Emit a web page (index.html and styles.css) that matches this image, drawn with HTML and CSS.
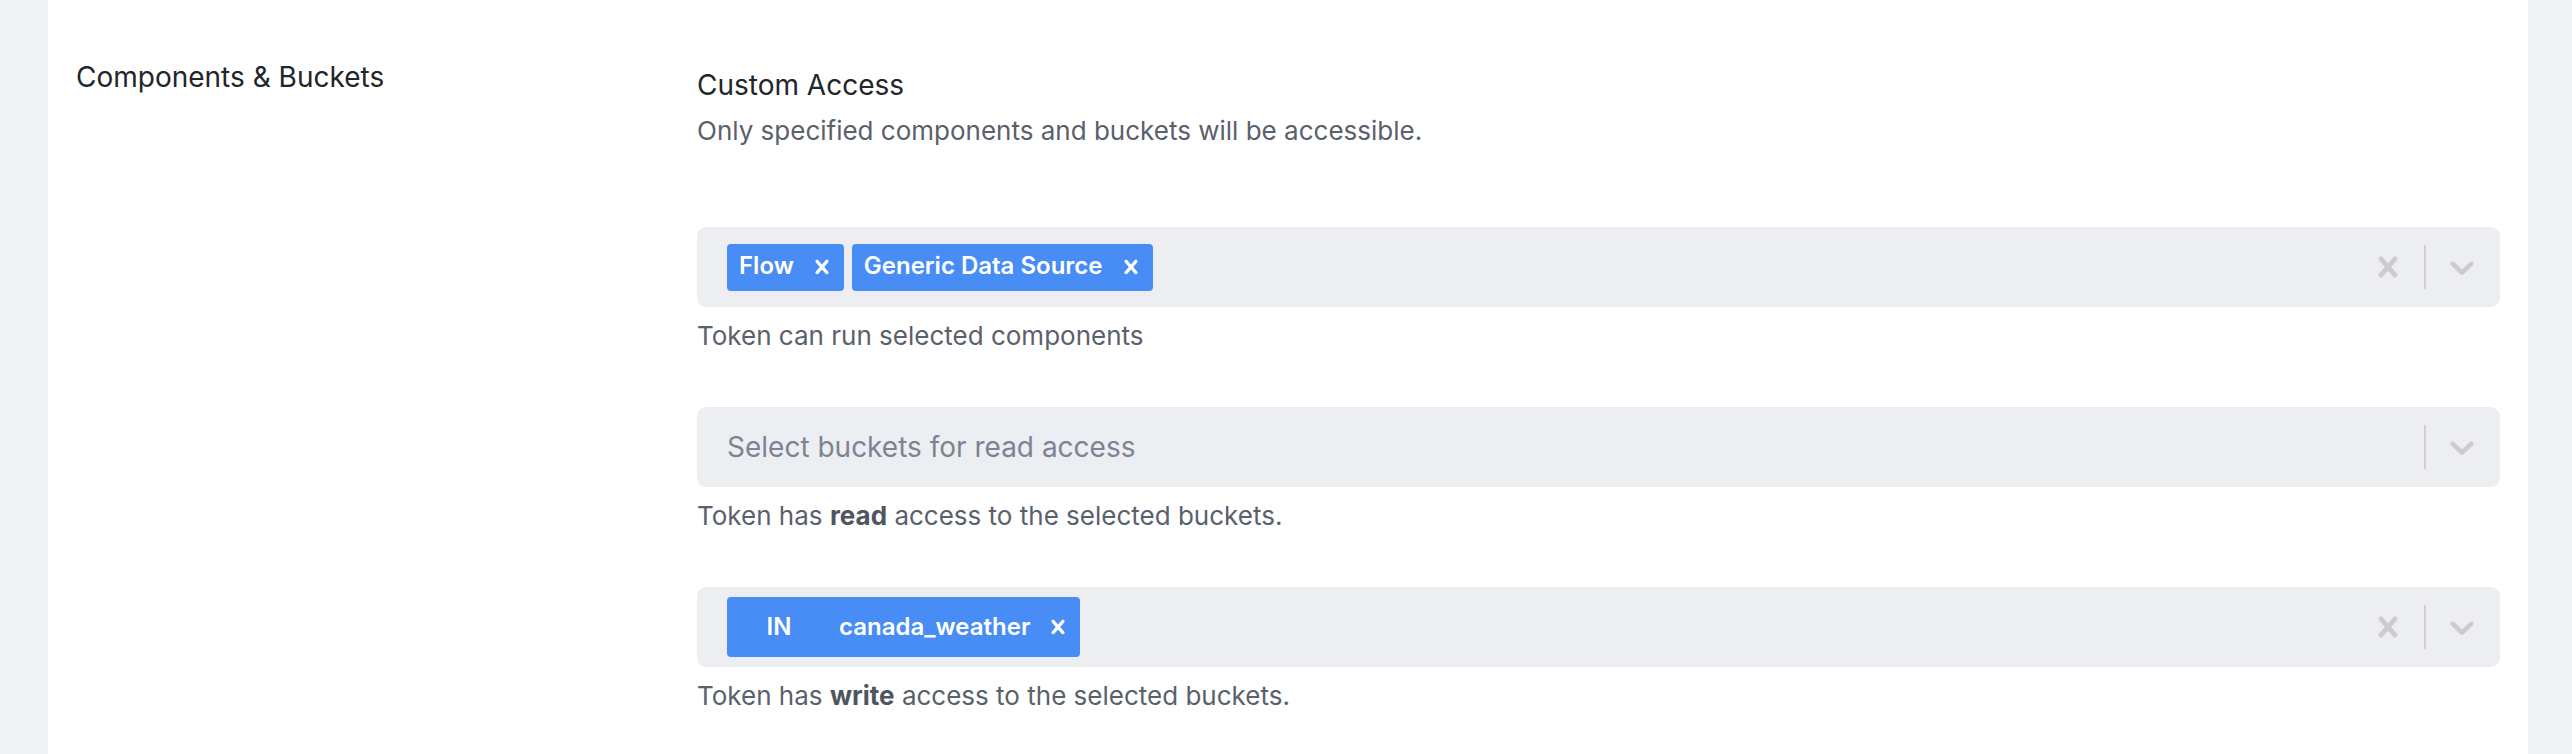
FILE: index.html
```html
<!DOCTYPE html>
<html lang="en">
<head>
<meta charset="utf-8">
<title>Components &amp; Buckets</title>
<link rel="stylesheet" href="styles.css">
</head>
<body>
<div class="page">
  <section class="card">
    <div class="row">
      <div class="label">Components &amp; Buckets</div>
      <div class="content">
        <div class="title">Custom Access</div>
        <p class="desc">Only specified components and buckets will be accessible.</p>

        <div class="field field-first">
          <div class="select">
            <div class="values">
              <span class="tag"><span class="tag-label">Flow</span><span class="tag-remove"><svg viewBox="0 0 20 20"><path d="M14.348 14.849c-0.469 0.469-1.229 0.469-1.697 0l-2.651-3.030-2.651 3.029c-0.469 0.469-1.229 0.469-1.697 0-0.469-0.469-0.469-1.229 0-1.697l2.758-3.15-2.759-3.152c-0.469-0.469-0.469-1.228 0-1.697s1.228-0.469 1.697 0l2.652 3.031 2.651-3.031c0.469-0.469 1.228-0.469 1.697 0s0.469 1.229 0 1.697l-2.758 3.152 2.758 3.15c0.469 0.469 0.469 1.229 0 1.698z"/></svg></span></span>
              <span class="tag"><span class="tag-label">Generic Data Source</span><span class="tag-remove"><svg viewBox="0 0 20 20"><path d="M14.348 14.849c-0.469 0.469-1.229 0.469-1.697 0l-2.651-3.030-2.651 3.029c-0.469 0.469-1.229 0.469-1.697 0-0.469-0.469-0.469-1.229 0-1.697l2.758-3.15-2.759-3.152c-0.469-0.469-0.469-1.228 0-1.697s1.228-0.469 1.697 0l2.652 3.031 2.651-3.031c0.469-0.469 1.228-0.469 1.697 0s0.469 1.229 0 1.697l-2.758 3.152 2.758 3.15c0.469 0.469 0.469 1.229 0 1.698z"/></svg></span></span>
            </div>
            <div class="indicators">
              <span class="ind"><svg viewBox="0 0 20 20"><path d="M14.348 14.849c-0.469 0.469-1.229 0.469-1.697 0l-2.651-3.030-2.651 3.029c-0.469 0.469-1.229 0.469-1.697 0-0.469-0.469-0.469-1.229 0-1.697l2.758-3.15-2.759-3.152c-0.469-0.469-0.469-1.228 0-1.697s1.228-0.469 1.697 0l2.652 3.031 2.651-3.031c0.469-0.469 1.228-0.469 1.697 0s0.469 1.229 0 1.697l-2.758 3.152 2.758 3.15c0.469 0.469 0.469 1.229 0 1.698z"/></svg></span>
              <span class="sep"></span>
              <span class="ind"><svg viewBox="0 0 20 20"><path d="M4.516 7.548c0.436-0.446 1.043-0.481 1.576 0l3.908 3.747 3.908-3.747c0.533-0.481 1.141-0.446 1.574 0 0.436 0.445 0.408 1.197 0 1.615-0.406 0.418-4.695 4.502-4.695 4.502-0.217 0.223-0.502 0.335-0.787 0.335s-0.57-0.112-0.789-0.335c0 0-4.287-4.084-4.695-4.502s-0.436-1.17 0-1.615z"/></svg></span>
            </div>
          </div>
          <p class="help">Token can run selected components</p>
        </div>

        <div class="field">
          <div class="select">
            <div class="values">
              <span class="placeholder">Select buckets for read access</span>
            </div>
            <div class="indicators">
              <span class="sep"></span>
              <span class="ind"><svg viewBox="0 0 20 20"><path d="M4.516 7.548c0.436-0.446 1.043-0.481 1.576 0l3.908 3.747 3.908-3.747c0.533-0.481 1.141-0.446 1.574 0 0.436 0.445 0.408 1.197 0 1.615-0.406 0.418-4.695 4.502-4.695 4.502-0.217 0.223-0.502 0.335-0.787 0.335s-0.57-0.112-0.789-0.335c0 0-4.287-4.084-4.695-4.502s-0.436-1.17 0-1.615z"/></svg></span>
            </div>
          </div>
          <p class="help">Token has <b>read</b> access to the selected buckets.</p>
        </div>

        <div class="field">
          <div class="select">
            <div class="values">
              <span class="tag tag-tall"><span class="tag-label"><span class="stage">IN</span><span class="bucket">canada_weather</span></span><span class="tag-remove"><svg viewBox="0 0 20 20"><path d="M14.348 14.849c-0.469 0.469-1.229 0.469-1.697 0l-2.651-3.030-2.651 3.029c-0.469 0.469-1.229 0.469-1.697 0-0.469-0.469-0.469-1.229 0-1.697l2.758-3.15-2.759-3.152c-0.469-0.469-0.469-1.228 0-1.697s1.228-0.469 1.697 0l2.652 3.031 2.651-3.031c0.469-0.469 1.228-0.469 1.697 0s0.469 1.229 0 1.697l-2.758 3.152 2.758 3.15c0.469 0.469 0.469 1.229 0 1.698z"/></svg></span></span>
            </div>
            <div class="indicators">
              <span class="ind"><svg viewBox="0 0 20 20"><path d="M14.348 14.849c-0.469 0.469-1.229 0.469-1.697 0l-2.651-3.030-2.651 3.029c-0.469 0.469-1.229 0.469-1.697 0-0.469-0.469-0.469-1.229 0-1.697l2.758-3.15-2.759-3.152c-0.469-0.469-0.469-1.228 0-1.697s1.228-0.469 1.697 0l2.652 3.031 2.651-3.031c0.469-0.469 1.228-0.469 1.697 0s0.469 1.229 0 1.697l-2.758 3.152 2.758 3.15c0.469 0.469 0.469 1.229 0 1.698z"/></svg></span>
              <span class="sep"></span>
              <span class="ind"><svg viewBox="0 0 20 20"><path d="M4.516 7.548c0.436-0.446 1.043-0.481 1.576 0l3.908 3.747 3.908-3.747c0.533-0.481 1.141-0.446 1.574 0 0.436 0.445 0.408 1.197 0 1.615-0.406 0.418-4.695 4.502-4.695 4.502-0.217 0.223-0.502 0.335-0.787 0.335s-0.57-0.112-0.789-0.335c0 0-4.287-4.084-4.695-4.502s-0.436-1.17 0-1.615z"/></svg></span>
            </div>
          </div>
          <p class="help">Token has <b>write</b> access to the selected buckets.</p>
        </div>
      </div>
    </div>
  </section>
</div>
</body>
</html>
```

FILE: styles.css
```css
html, body {
  margin: 0;
  padding: 0;
}

body {
  background: #f1f3f7;
  font-family: Inter, "Noto Sans", "Liberation Sans", sans-serif;
  color: #222529;
}

.page {
  padding: 0 44px 0 48px;
}

.card {
  background: #ffffff;
  padding: 57px 28px 0;
  min-height: 754px;
  box-sizing: border-box;
}

.row {
  display: grid;
  grid-template-columns: 1fr 3fr;
  column-gap: 20px;
}

.label {
  font-size: 28px;
  line-height: 40px;
  color: #222529;
}

.content {
  padding-top: 8px;
}

.title {
  font-size: 28px;
  line-height: 40px;
  color: #222529;
}

.desc {
  margin: 10px 0 0;
  font-size: 26px;
  line-height: 32px;
  color: #5a616d;
}

.field {
  margin-top: 53px;
}

.field-first {
  margin-top: 80px;
}

.select {
  display: flex;
  align-items: center;
  height: 80px;
  background: #edeef2;
  border-radius: 9px;
}

.values {
  flex: 1;
  min-width: 0;
  display: flex;
  align-items: center;
  gap: 8px;
  padding-left: 30px;
}

.placeholder {
  font-size: 28px;
  line-height: 40px;
  color: #7c8492;
}

.tag {
  display: flex;
  align-items: stretch;
  background: #478df5;
  color: #ffffff;
  border-radius: 4px;
  font-size: 24px;
  font-weight: 600;
}

.tag-label {
  padding: 4px 6px 8px 12px;
  line-height: 35px;
  white-space: nowrap;
}

.tag-tall .tag-label {
  padding: 6px 6px 6px 12px;
  line-height: 48px;
}

.stage {
  display: inline-block;
  width: 80px;
  text-align: center;
}

.bucket {
  margin-left: 20px;
}

.tag-remove {
  display: flex;
  align-items: center;
  padding: 0 8px;
}

.tag-remove svg {
  width: 28px;
  height: 28px;
  fill: #ffffff;
  display: block;
}

.indicators {
  display: flex;
  align-items: center;
  padding-right: 2px;
}

.ind {
  display: flex;
  padding: 16px;
}

.ind svg {
  width: 40px;
  height: 40px;
  fill: #cccccc;
  display: block;
}

.sep {
  width: 2px;
  height: 44px;
  background: #d0d0d0;
}

.help {
  margin: 11px 0 0;
  font-size: 26px;
  line-height: 36px;
  color: #5a616d;
}

.help b {
  font-weight: 700;
  color: #4f5560;
}
```
